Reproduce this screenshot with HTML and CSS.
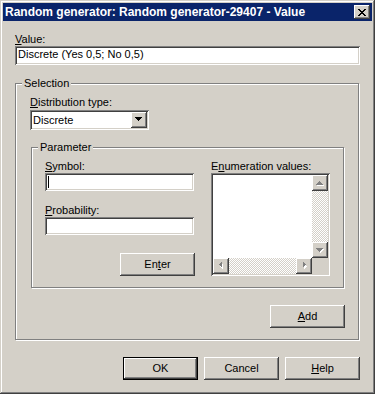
FILE: index.html
```html
<!DOCTYPE html>
<html lang="en">
<head>
    <meta charset="UTF-8">
    <meta name="viewport" content="width=device-width, initial-scale=1.0">
    <title>Random generator - Value</title>
    <link rel="stylesheet" href="styles.css">
</head>
<body>
    <div class="window">
        <div class="titlebar">
            <span class="title">Random generator: Random generator-29407 - Value</span>
            <span class="close-btn">
                <svg width="8" height="7" viewBox="0 0 8 7"><path d="M0 0h2v1H0zM6 0h2v1H6zM1 1h2v1H1zM5 1h2v1H5zM2 2h4v1H2zM3 3h2v1H3zM2 4h4v1H2zM1 5h2v1H1zM5 5h2v1H5zM0 6h2v1H0zM6 6h2v1H6z" fill="#000"/></svg>
            </span>
        </div>
        <div class="content">
            <div class="label"><u>V</u>alue:</div>
            <div class="field value-field">Discrete (Yes 0,5; No 0,5)</div>

            <div class="group selection">
                <div class="group-title">Selection</div>
                <div class="label dist-label"><u>D</u>istribution type:</div>
                <div class="combo">
                    <span class="combo-text">Discrete</span>
                    <span class="raised combo-btn">
                        <svg width="16" height="16" viewBox="0 0 16 16"><path d="M4 5h7v1H4zM5 6h5v1H5zM6 7h3v1H6zM7 8h1v1H7z" fill="#000"/></svg>
                    </span>
                </div>

                <div class="group parameter">
                    <div class="group-title">Parameter</div>
                    <div class="param-cols">
                        <div class="param-left">
                            <div class="label"><u>S</u>ymbol:</div>
                            <div class="field small-field"><span class="caret"></span></div>
                            <div class="label prob-label"><u>P</u>robability:</div>
                            <div class="field small-field"></div>
                            <div class="enter-row">
                                <div class="raised push">En<u>t</u>er</div>
                            </div>
                        </div>
                        <div class="param-right">
                            <div class="label">E<u>n</u>umeration values:</div>
                            <div class="field listbox">
                                <div class="list-top">
                                    <div class="list-area"></div>
                                    <div class="vscroll">
                                        <span class="raised sb-btn">
                                            <svg width="16" height="16" viewBox="0 0 16 16"><path d="M8 7h1v1H8zM7 8h3v1H7zM6 9h5v1H6zM5 10h7v1H5z" fill="#fff"/><path d="M7 6h1v1H7zM6 7h3v1H6zM5 8h5v1H5zM4 9h7v1H4z" fill="#808080"/></svg>
                                        </span>
                                        <span class="track"></span>
                                        <span class="raised sb-btn">
                                            <svg width="16" height="16" viewBox="0 0 16 16"><path d="M5 7h7v1H5zM6 8h5v1H6zM7 9h3v1H7zM8 10h1v1H8z" fill="#fff"/><path d="M4 6h7v1H4zM5 7h5v1H5zM6 8h3v1H6zM7 9h1v1H7z" fill="#808080"/></svg>
                                        </span>
                                    </div>
                                </div>
                                <div class="hscroll">
                                    <span class="raised sb-btn">
                                        <svg width="16" height="16" viewBox="0 0 16 16"><path d="M8 5h1v1H8zM7 6h2v1H7zM6 7h3v1H6zM7 8h2v1H7zM8 9h1v1H8z" fill="#fff" transform="translate(1,1)"/><path d="M8 4h1v1H8zM7 5h2v1H7zM6 6h3v1H6zM7 7h2v1H7zM8 8h1v1H8z" fill="#808080"/></svg>
                                    </span>
                                    <span class="track"></span>
                                    <span class="raised sb-btn">
                                        <svg width="16" height="16" viewBox="0 0 16 16"><path d="M7 5h1v1H7zM7 6h2v1H7zM7 7h3v1H7zM7 8h2v1H7zM7 9h1v1H7z" fill="#fff" transform="translate(1,1)"/><path d="M7 4h1v1H7zM7 5h2v1H7zM7 6h3v1H7zM7 7h2v1H7zM7 8h1v1H7z" fill="#808080"/></svg>
                                    </span>
                                    <span class="corner"></span>
                                </div>
                            </div>
                        </div>
                    </div>
                </div>

                <div class="add-row">
                    <div class="raised push"><u>A</u>dd</div>
                </div>
            </div>

            <div class="footer">
                <div class="raised push default-btn">OK</div>
                <div class="raised push">Cancel</div>
                <div class="raised push"><u>H</u>elp</div>
            </div>
        </div>
    </div>
</body>
</html>
```

FILE: styles.css
```css
body{
    margin: 0;
    background-color: #d4d0c8;
    font-family: "Liberation Sans", Arial, sans-serif;
    font-size: 11px;
    color: #000;
}
.window{
    width: 375px;
    height: 394px;
    box-sizing: border-box;
    padding: 3px;
    background-color: #d4d0c8;
    box-shadow: inset -1px -1px #404040, inset 1px 1px #d4d0c8, inset -2px -2px #808080, inset 2px 2px #fff;
}

/***************** -title bar- *******************/

.titlebar{
    height: 18px;
    margin-bottom: 1px;
    background-color: #0a246a;
    display: flex;
    align-items: center;
    justify-content: space-between;
    padding-left: 2px;
}
.title{
    color: #fff;
    font-weight: bold;
    font-size: 12px;
    white-space: nowrap;
}
.close-btn{
    width: 16px;
    height: 14px;
    margin-right: 2px;
    background-color: #d4d0c8;
    display: flex;
    align-items: center;
    justify-content: center;
    box-shadow: inset -1px -1px #404040, inset 1px 1px #fff, inset -2px -2px #808080;
}
.close-btn svg{
    display: block;
    margin: 0 1px 0 0;
}

/***************** -content- *******************/

.content{
    padding: 11px 12px 0 12px;
}
.label{
    line-height: 13px;
    height: 13px;
    white-space: nowrap;
}
.field{
    box-sizing: border-box;
    background-color: #fff;
    box-shadow: inset 1px 1px #808080, inset -1px -1px #fff, inset 2px 2px #404040, inset -2px -2px #d4d0c8;
}
.value-field{
    height: 19px;
    line-height: 15px;
    padding: 1px 3px;
}
.raised{
    background-color: #d4d0c8;
    box-shadow: inset -1px -1px #404040, inset 1px 1px #fff, inset -2px -2px #808080, inset 2px 2px #d4d0c8;
}

/***************** -group boxes- *******************/

.group{
    border: 1px solid #808080;
    box-shadow: inset 1px 1px #fff, 1px 1px #fff;
}
.group-title{
    width: fit-content;
    margin-top: -7px;
    padding: 0 2px;
    line-height: 13px;
    background-color: #d4d0c8;
}
.selection{
    width: 344px;
    box-sizing: border-box;
    margin-top: 18px;
    padding: 0 13px 11px 14px;
}
.selection > .group-title{
    margin-left: -8px;
}
.dist-label{
    margin-top: 6px;
}
.combo{
    width: 119px;
    height: 20px;
    box-sizing: border-box;
    margin-top: 1px;
    padding: 2px;
    display: flex;
    justify-content: space-between;
    background-color: #fff;
    box-shadow: inset 1px 1px #808080, inset -1px -1px #fff, inset 2px 2px #404040, inset -2px -2px #d4d0c8;
}
.combo-text{
    line-height: 15px;
    padding: 1px 0 0 1px;
}
.combo-btn{
    width: 16px;
    height: 16px;
}
.combo-btn svg, .sb-btn svg{
    display: block;
}

.parameter{
    width: 313px;
    box-sizing: border-box;
    margin: 17px 0 0 1px;
    padding: 0 13px 11px 13px;
}
.parameter > .group-title{
    margin-left: -7px;
}
.param-cols{
    display: flex;
    margin-top: 6px;
}
.param-left{
    width: 149px;
}
.param-right{
    width: 119px;
    margin-left: 17px;
}
.small-field{
    height: 18px;
    padding: 3px 0 0 3px;
}
.caret{
    display: block;
    width: 1px;
    height: 12px;
    background-color: #000;
}
.prob-label{
    margin-top: 13px;
}
.enter-row{
    display: flex;
    justify-content: flex-end;
    margin-top: 18px;
    margin-right: -1px;
}
.push{
    width: 75px;
    height: 23px;
    line-height: 23px;
    text-align: center;
}

/***************** -list box- *******************/

.listbox{
    height: 103px;
    padding: 2px;
    display: flex;
    flex-direction: column;
}
.list-top{
    flex: 1;
    display: flex;
}
.list-area{
    flex: 1;
    background-color: #fff;
}
.vscroll{
    width: 16px;
    display: flex;
    flex-direction: column;
}
.hscroll{
    height: 16px;
    display: flex;
}
.sb-btn{
    width: 16px;
    height: 16px;
    flex-shrink: 0;
}
.track{
    flex: 1;
    background-image: repeating-conic-gradient(#fff 0 25%, #d4d0c8 0 50%);
    background-size: 2px 2px;
}
.corner{
    width: 16px;
    height: 16px;
    background-color: #d4d0c8;
}

/***************** -buttons- *******************/

.add-row{
    display: flex;
    justify-content: flex-end;
    margin-top: 17px;
}
.footer{
    display: flex;
    justify-content: flex-end;
    gap: 6px;
    margin-top: 17px;
}
.default-btn{
    box-sizing: border-box;
    line-height: 21px;
    border: 1px solid #000;
}
```
